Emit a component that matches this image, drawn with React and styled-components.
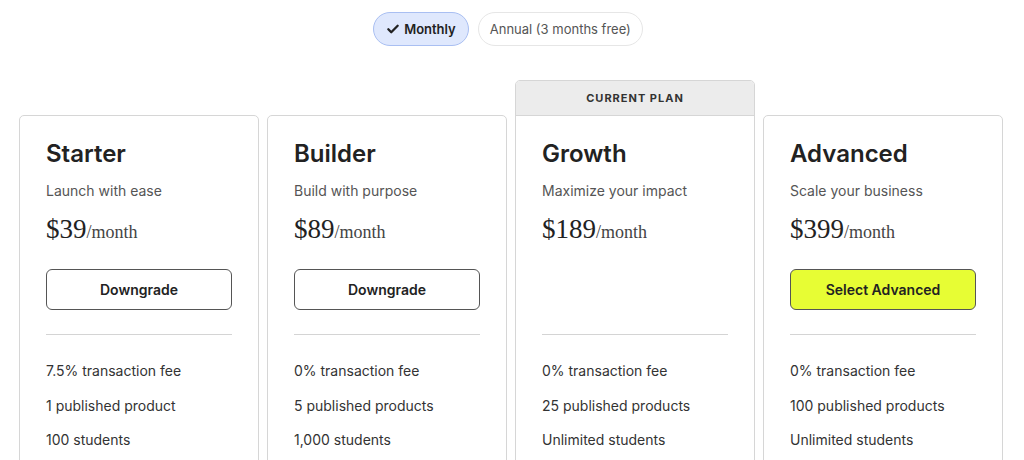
import React from "react";
import styled, { createGlobalStyle } from "styled-components";

const Global = createGlobalStyle`
  html, body { margin: 0; padding: 0; background: #fff; }
  body { font-family: Inter, "Liberation Sans", sans-serif; color: #222; overflow: hidden; }
  * { box-sizing: border-box; }
`;

const Page = styled.div`
  width: 1024px;
  height: 460px;
  overflow: hidden;
  padding: 12px 20px 0 19px;
  display: flex;
  flex-direction: column;
  align-items: stretch;
`;

const Toggle = styled.div`
  display: flex;
  justify-content: center;
  gap: 9px;
  padding-right: 7px;
`;

const Pill = styled.button`
  height: 34px;
  padding: 0 ${(p) => (p.$active ? "12px" : "11px")};
  border-radius: 17px;
  border: 1px solid ${(p) => (p.$active ? "#a9bff2" : "#e6e6e6")};
  background: ${(p) => (p.$active ? "#dfe8fd" : "#fff")};
  color: ${(p) => (p.$active ? "#222" : "#555")};
  font-family: Inter, "Liberation Sans", sans-serif;
  font-size: 13px;
  font-weight: ${(p) => (p.$active ? 600 : 400)};
  display: flex;
  align-items: center;
  gap: 4px;
`;

const Cards = styled.div`
  margin-top: 34px;
  display: grid;
  grid-template-columns: repeat(4, 240px);
  column-gap: 8px;
  align-items: end;
`;

const Card = styled.div`
  border: 1px solid #d6d6d6;
  border-radius: 5px;
  background: #fff;
  overflow: hidden;
`;

const Banner = styled.div`
  height: 35px;
  background: #ececec;
  border-bottom: 1px solid #d6d6d6;
  display: flex;
  align-items: center;
  justify-content: center;
  font-size: 11px;
  font-weight: 700;
  letter-spacing: 1px;
  color: #333;
`;

const Body = styled.div`
  padding: 23px 26px 40px 26px;
  display: flex;
  flex-direction: column;
`;

const Title = styled.h2`
  margin: 0;
  font-size: 24px;
  line-height: 30px;
  font-weight: 600;
  color: #222;
`;

const Subtitle = styled.div`
  margin-top: 12px;
  font-size: 14px;
  line-height: 20px;
  color: #555;
`;

const Price = styled.div`
  margin-top: 12px;
  font-family: "Liberation Serif", "DejaVu Serif", serif;
  font-size: 27px;
  line-height: 32px;
  color: #222;
  span {
    font-size: 18px;
    color: #444;
  }
`;

const Action = styled.button`
  margin-top: 21px;
  height: 41px;
  width: 100%;
  border-radius: 6px;
  border: 1px solid #555;
  background: ${(p) => (p.$primary ? "#e7fd34" : "#fff")};
  font-family: Inter, "Liberation Sans", sans-serif;
  font-size: 14px;
  font-weight: 600;
  color: #222;
  visibility: ${(p) => (p.$hidden ? "hidden" : "visible")};
`;

const Divider = styled.hr`
  margin: 24px 0 0 0;
  border: none;
  border-top: 1px solid #d4d4d4;
`;

const Features = styled.ul`
  list-style: none;
  margin: 26px 0 0 0;
  padding: 0;
  display: flex;
  flex-direction: column;
  gap: 14.5px;
`;

const Feature = styled.li`
  font-size: 14px;
  line-height: 20px;
  color: #333;
`;

const plans = [
  { name: "Starter", tag: "Launch with ease", price: 39, action: "Downgrade", features: ["7.5% transaction fee", "1 published product", "100 students"] },
  { name: "Builder", tag: "Build with purpose", price: 89, action: "Downgrade", features: ["0% transaction fee", "5 published products", "1,000 students"] },
  { name: "Growth", tag: "Maximize your impact", price: 189, current: true, features: ["0% transaction fee", "25 published products", "Unlimited students"] },
  { name: "Advanced", tag: "Scale your business", price: 399, action: "Select Advanced", primary: true, features: ["0% transaction fee", "100 published products", "Unlimited students"] },
];

const Check = () => (
  <svg width="14" height="14" viewBox="0 0 24 24" fill="none" stroke="#222" strokeWidth="4" strokeLinecap="round" strokeLinejoin="round">
    <path d="M4 12.5l5 5L20 6.5" />
  </svg>
);

export default function App() {
  return (
    <>
      <Global />
      <Page>
        <Toggle>
          <Pill $active>
            <Check />
            Monthly
          </Pill>
          <Pill>Annual (3 months free)</Pill>
        </Toggle>
        <Cards>
          {plans.map((p) => (
            <Card key={p.name}>
              {p.current && <Banner>CURRENT PLAN</Banner>}
              <Body>
                <Title>{p.name}</Title>
                <Subtitle>{p.tag}</Subtitle>
                <Price>
                  ${p.price}
                  <span>/month</span>
                </Price>
                <Action $primary={p.primary} $hidden={p.current}>
                  {p.action || "Current"}
                </Action>
                <Divider />
                <Features>
                  {p.features.map((f) => (
                    <Feature key={f}>{f}</Feature>
                  ))}
                </Features>
              </Body>
            </Card>
          ))}
        </Cards>
      </Page>
    </>
  );
}
